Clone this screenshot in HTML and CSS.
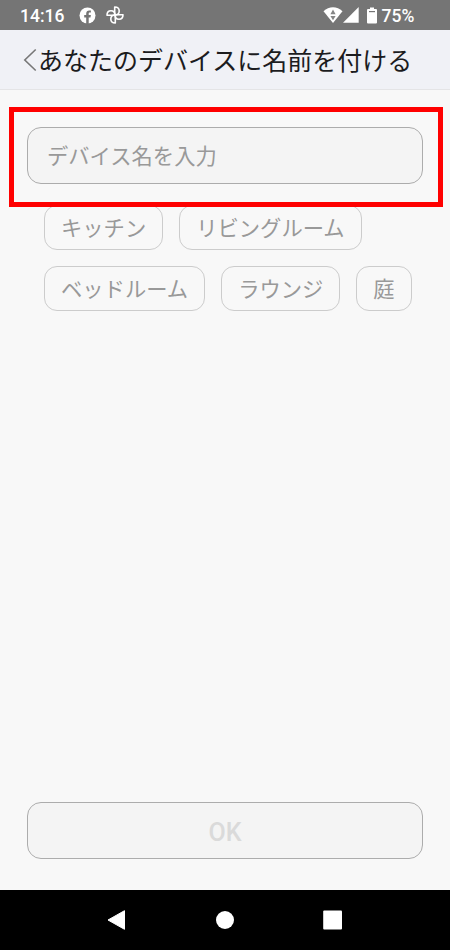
FILE: index.html
```html
<!DOCTYPE html>
<html lang="ja">
<head>
<meta charset="utf-8">
<title>あなたのデバイスに名前を付ける</title>
<link rel="stylesheet" href="styles.css">
</head>
<body>
<div class="screen">
  <div class="status">
    <span class="clock">14:16</span>
    <svg class="fb" width="17" height="17" viewBox="0 0 17 17"><circle cx="8.5" cy="8.5" r="8" fill="#fff"/><path d="M7.2 17V10.6H5.2V8H7.2V6.6C7.2 4.5 8.4 3.4 10.2 3.4L11.9 3.55V5.6H10.8C9.9 5.6 9.7 6.1 9.7 6.8V8H11.9L11.5 10.6H9.7V17Z" fill="#757575"/></svg>
    <svg class="pinwheel" width="18" height="18" viewBox="0 0 18 18" fill="none" stroke="#fff" stroke-width="1.6" stroke-linejoin="round"><path d="M8.7 9V1C11.6 1 13.2 2.8 13.2 5C13.2 7.2 11.6 9 8.7 9Z"/><path d="M8.7 9V1C11.6 1 13.2 2.8 13.2 5C13.2 7.2 11.6 9 8.7 9Z" transform="rotate(90 9 9)"/><path d="M8.7 9V1C11.6 1 13.2 2.8 13.2 5C13.2 7.2 11.6 9 8.7 9Z" transform="rotate(180 9 9)"/><path d="M8.7 9V1C11.6 1 13.2 2.8 13.2 5C13.2 7.2 11.6 9 8.7 9Z" transform="rotate(270 9 9)"/></svg>
    <svg class="wifi" width="20" height="16" viewBox="0 0 20 16"><path d="M.5 4.2C6 -1 14 -1 19.5 4.2L10 16Z" fill="#fff"/><path d="M10 2.5L12.6 7.2H7.4ZM7.4 9H12.6L10 13.2Z" fill="#858585"/></svg>
    <svg class="signal" width="16" height="16" viewBox="0 0 16 16"><path d="M15.7 0V15.7H0Z" fill="#fff"/></svg>
    <svg class="battery" width="10" height="17" viewBox="0 0 10 17"><path d="M3 .5H7V2H9Q10 2 10 3V15.5Q10 16.5 9 16.5H1Q0 16.5 0 15.5V3Q0 2 1 2H3Z" fill="#fff"/><path d="M2 4H8V5.2H2Z" fill="#757575"/></svg>
    <span class="percent">75%</span>
  </div>
  <header class="header">
    <svg class="back" width="14" height="24" viewBox="0 0 14 24"><path d="M12.7 1.5L1.8 12L12.7 22.5" fill="none" stroke="#777" stroke-width="1.6"/></svg>
    <h1>あなたのデバイスに名前を付ける</h1>
  </header>
  <main>
    <div class="highlight">
      <div class="field">デバイス名を入力</div>
    </div>
    <div class="chips">
      <span class="chip">キッチン</span><span class="chip">リビングルーム</span>
      <span class="chip">ベッドルーム</span><span class="chip">ラウンジ</span><span class="chip">庭</span>
    </div>
    <div class="ok">OK</div>
  </main>
  <nav class="nav">
    <svg width="20" height="22" viewBox="0 0 20 22"><path d="M17.5 1.7V20.3L1 11Z" fill="#fff" stroke="#fff" stroke-linejoin="round"/></svg>
    <svg width="20" height="20" viewBox="0 0 20 20"><circle cx="10" cy="10" r="9" fill="#fff"/></svg>
    <svg width="20" height="20" viewBox="0 0 20 20"><rect x=".2" y=".4" width="18.8" height="19.2" rx="1" fill="#fff"/></svg>
  </nav>
</div>
</body>
</html>
```
FILE: styles.css
```css
* { box-sizing: border-box; }
body { margin: 0; font-family: Roboto, "Noto Sans CJK JP", sans-serif; }
.screen { width: 450px; height: 950px; display: flex; flex-direction: column; background: #f8f8f8; overflow: hidden; }
.status { height: 30px; flex: none; display: flex; align-items: center; background: #757575; color: #fff; padding-left: 20px; font-size: 17.5px; font-weight: 500; }
.status svg { flex: none; }
.clock { width: 58.5px; padding-top: 1px; }
.pinwheel { margin-left: 10px; }
.wifi { margin-left: 199px; }
.battery { margin-left: 8.5px; }
.percent { margin-left: 4.5px; padding-top: 1px; }
.header { height: 60px; flex: none; display: flex; align-items: center; padding-left: 23px; background: #f0f1f6; border-bottom: 1px solid #e4e4e6; }
h1 { margin: -1px 0 0 1px; font-family: "Noto Sans CJK JP", sans-serif; font-size: 25px; line-height: 36px; font-weight: 400; color: #1c1c1e; white-space: nowrap; }
main { flex: 1; display: flex; flex-direction: column; padding-top: 17px; }
.highlight { position: relative; z-index: 1; width: 434px; height: 100px; margin-left: 9px; padding: 15px 15px 0 13px; border: 5px solid #f00; background: #f8f8f8; }
.field { width: 396px; height: 57px; border: 1px solid #acacac; border-radius: 14px; background: #f4f4f4; padding-left: 19px; font-size: 21.3px; line-height: 57px; color: #999; }
.chips { display: flex; flex-wrap: wrap; gap: 16px; width: 390px; margin: -2px 0 0 44px; }
.chip { height: 45px; border: 1px solid #ccc; border-radius: 13px; padding: 0 16px; font-size: 21.3px; line-height: 45px; color: #999; white-space: nowrap; }
.ok { width: 396px; height: 57px; margin: auto 0 31px 27px; border: 1px solid #acacac; border-radius: 14px; background: #f4f4f4; text-align: center; font-size: 25px; line-height: 59px; font-weight: 500; color: #dadada; }
.nav { height: 60px; flex: none; display: flex; align-items: center; justify-content: center; gap: 88px; background: #000; }
```
